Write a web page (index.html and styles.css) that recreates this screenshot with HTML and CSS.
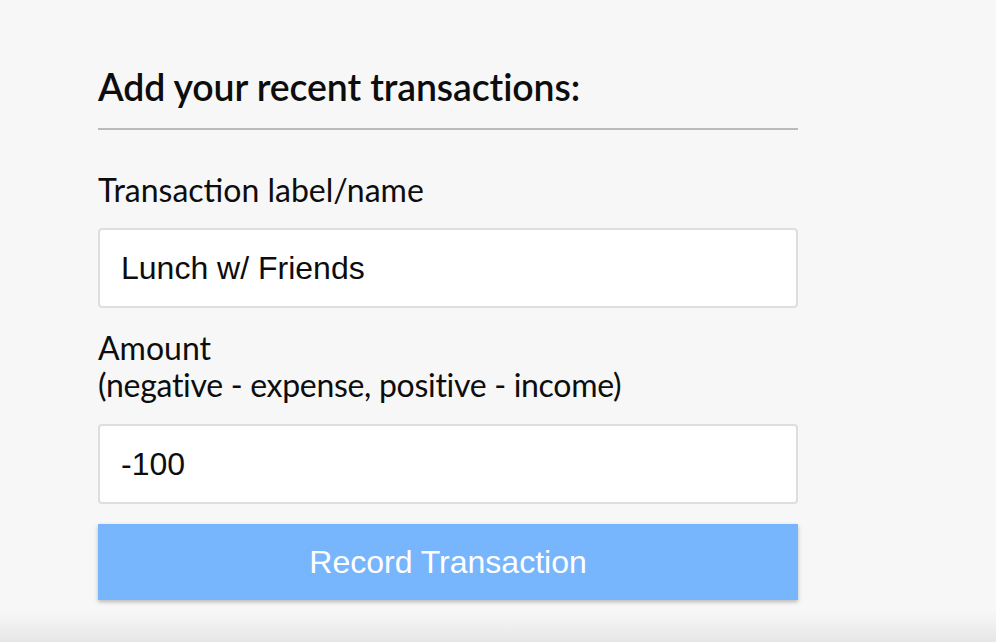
FILE: index.html
```html
<!DOCTYPE html>
<html>
<head>
<meta charset="utf-8">
<link rel="stylesheet" href="styles.css">
</head>
<body>
<div class="page">
  <form class="form">
    <h3 class="title">Add your recent transactions:</h3>
    <div class="field first">
      <label class="label" for="text">Transaction label/name</label>
      <input class="input" id="text" type="text" value="Lunch w/ Friends">
    </div>
    <div class="field second">
      <label class="label" for="amount">Amount<br><span class="hint">(negative - expense, positive - income)</span></label>
      <input class="input" id="amount" type="text" value="-100">
    </div>
    <button class="btn" type="button">Record Transaction</button>
  </form>
  <div class="fade"></div>
</div>
</body>
</html>
```
FILE: styles.css
```css
html, body {
  margin: 0;
  padding: 0;
  background: #f7f7f7;
}
.page {
  width: 996px;
  height: 642px;
  overflow: hidden;
  position: relative;
  font-family: Lato, "Liberation Sans", sans-serif;
  color: #0d0d0d;
}
.form {
  width: 700px;
  margin-left: 98px;
  padding-top: 65px;
}
.title {
  margin: 0;
  font-size: 37.44px;
  font-weight: 600;
  line-height: 44px;
  letter-spacing: -0.1px;
  padding-bottom: 19px;
  border-bottom: 2px solid #bbb;
}
.label {
  display: block;
  font-size: 32px;
  line-height: 37px;
}
.hint {
  letter-spacing: -0.3px;
}
.first .label {
  margin-top: 41px;
  margin-bottom: 20px;
}
.second .label {
  margin-top: 21px;
  margin-bottom: 21px;
}
.input {
  display: block;
  box-sizing: border-box;
  width: 700px;
  height: 80px;
  margin: 0;
  border: 2px solid #dedede;
  border-radius: 4px;
  background: #fff;
  padding: 0 21px;
  font-family: "Liberation Sans", Arial, sans-serif;
  font-size: 32px;
  color: #0d0d0d;
  outline: none;
}
.btn {
  display: block;
  width: 700px;
  height: 76px;
  margin-top: 20px;
  border: none;
  background: #77b6fc;
  color: #fff;
  font-family: "Liberation Sans", Arial, sans-serif;
  font-size: 32px;
  box-shadow: 0 2px 4px rgba(0,0,0,0.25);
}
.fade {
  position: absolute;
  left: 0;
  right: 0;
  bottom: 0;
  height: 30px;
  background: linear-gradient(to bottom, rgba(232,232,232,0), #e6e6e6);
}
```
